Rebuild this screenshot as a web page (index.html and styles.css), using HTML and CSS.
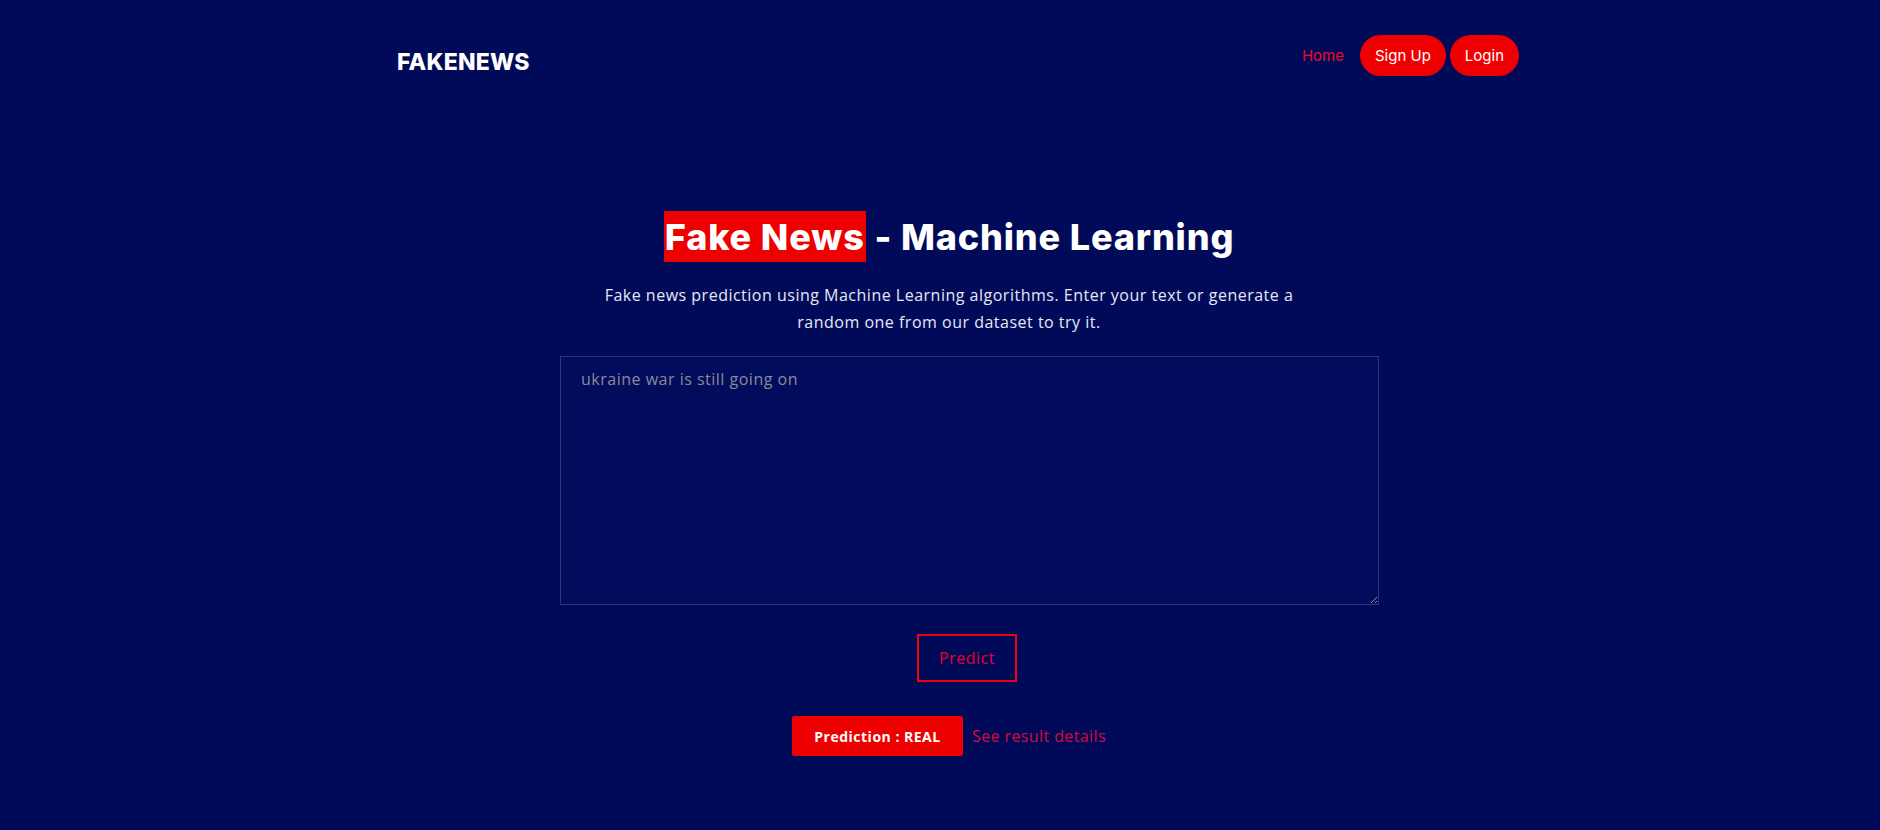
FILE: index.html
```html
<!DOCTYPE html>
<html lang="en">
<head>
<meta charset="utf-8">
<title>FakeNews</title>
<link rel="stylesheet" href="styles.css">
</head>
<body>
<header class="nav">
  <a class="logo" href="#">FAKENEWS</a>
  <nav class="menu">
    <a class="menu-link" href="#">Home</a>
    <a class="pill" href="#">Sign Up</a>
    <a class="pill" href="#">Login</a>
  </nav>
</header>
<main class="content">
  <h1 class="title"><span class="mark">Fake News</span> - Machine Learning</h1>
  <p class="lead">Fake news prediction using Machine Learning algorithms. Enter your text or generate a random one from our dataset to try it.</p>
  <textarea class="input" placeholder="ukraine war is still going on"></textarea>
  <button class="predict" type="button">Predict</button>
  <div class="result">
    <span class="badge">Prediction : REAL</span>
    <a class="details" href="#">See result details</a>
  </div>
</main>
</body>
</html>
```
FILE: styles.css
```css
* { box-sizing: border-box; }
html, body { height: 100%; }
body {
  margin: 0;
  background: #010a58;
  font-family: "Open Sans", "Liberation Sans", sans-serif;
  color: #fff;
}
a { text-decoration: none; }

.nav {
  width: 1122px;
  margin-left: calc(50% - 543px);
  padding-top: 35px;
  display: flex;
  justify-content: space-between;
  align-items: flex-start;
}
.logo {
  font-family: "Inter", "DejaVu Sans", sans-serif;
  font-weight: 800;
  font-size: 23px;
  color: #fff;
  margin-top: 13px;
  letter-spacing: 0.2px;
}
.menu { display: flex; align-items: center; gap: 4px; }
.menu-link {
  font-family: "Inter", sans-serif;
  color: #ee0a2a;
  font-size: 15px;
  margin-right: 12px;
}
.pill {
  height: 41px;
  padding: 0 15px;
  display: flex;
  align-items: center;
  border-radius: 21px;
  background: #ee0000;
  color: #fff;
  font-family: "Inter", sans-serif;
  font-size: 15px;
}

.content {
  width: 819px;
  margin: 0 0 0 calc(50% - 380px);
  display: flex;
  flex-direction: column;
  align-items: center;
}
.title {
  align-self: stretch;
  margin: 136px 0 0;
  padding-right: 41px;
  text-align: center;
  font-family: "Inter", "DejaVu Sans", sans-serif;
  font-weight: 800;
  font-size: 36px;
  line-height: 51px;
  letter-spacing: 0.85px;
}
.mark { background: #ee0000; padding: 4px 1px 3px; }
.lead {
  align-self: stretch;
  margin: 19px 41px 0 0;
  padding: 0 36px;
  text-align: center;
  font-size: 16px;
  letter-spacing: 0.5px;
  line-height: 27px;
  color: #e6e8f5;
}
.input {
  width: 819px;
  height: 249px;
  margin-top: 20px;
  background: #020c5c;
  border: 1px solid #2c3474;
  border-radius: 0;
  padding: 11px 20px;
  color: #ccc;
  font-family: "Open Sans", sans-serif;
  font-size: 16px;
  letter-spacing: 0.5px;
  resize: vertical;
}
.input::placeholder { color: #8a8a95; }
.predict {
  margin: 29px 5px 0 0;
  width: 100px;
  height: 48px;
  background: transparent;
  border: 2px solid #f00010;
  color: #e8002d;
  font-family: "Open Sans", sans-serif;
  font-size: 16px;
  letter-spacing: 0.5px;
}
.result {
  margin-top: 34px;
  align-self: stretch;
  padding-right: 41px;
  display: flex;
  justify-content: center;
  align-items: center;
  gap: 9px;
}
.badge {
  width: 171px;
  height: 40px;
  display: flex;
  align-items: center;
  justify-content: center;
  background: #ee0000;
  border-radius: 2px;
  font-weight: 700;
  font-size: 14px;
  letter-spacing: 0.5px;
}
.details { color: #d40b3c; font-size: 16px; letter-spacing: 0.4px; }
```
